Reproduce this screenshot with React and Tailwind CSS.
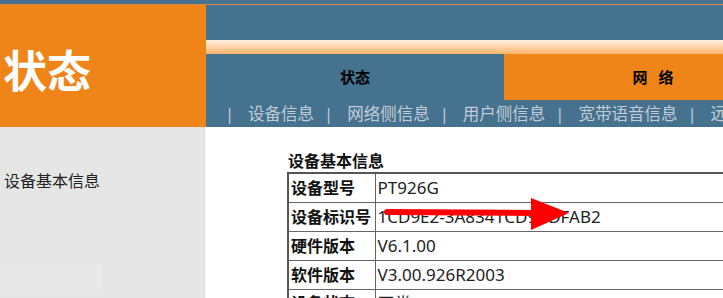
import React from "react";

const navItems = ["设备信息", "网络侧信息", "用户侧信息", "宽带语音信息", "远程管理状态"];

const rows = [
  ["设备型号", "PT926G"],
  ["设备标识号", "1CD9E2-3A8341CD9BDFAB2"],
  ["硬件版本", "V6.1.00"],
  ["软件版本", "V3.00.926R2003"],
  ["设备状态", "正常"],
];

export default function App() {
  return (
    <div
      className="w-[723px] h-[298px] overflow-hidden bg-white relative"
      style={{ fontFamily: '"Noto Sans", "Noto Sans CJK SC", sans-serif' }}
    >
      {/* top strip */}
      <div className="h-[4px] bg-[#44728f]" />
      <div className="h-[1px] bg-[#d98a3e]" />

      {/* header */}
      <div className="flex h-[122px]">
        <div className="w-[206px] shrink-0 bg-[#ef8419] flex items-center pl-[3px]">
          <span className="text-white font-bold text-[44px] leading-none mt-[10px]">状态</span>
        </div>
        <div className="flex-1 flex flex-col bg-[#44728f] min-w-0">
          <div className="h-[35px]" />
          <div className="h-[14px] bg-gradient-to-b from-[#fff1e6] via-[#ffd3a6] to-[#ffb56a]" />
          <div className="flex h-[46px]">
            <div className="w-[298px] shrink-0 flex items-center justify-center text-[15px] font-bold text-black">状态</div>
            <div className="w-[298px] shrink-0 bg-[#ef8419] flex items-center justify-center gap-[11px] text-[15px] font-bold text-black">
              <span>网</span>
              <span>络</span>
            </div>
          </div>
          <div className="flex-1 flex items-center whitespace-nowrap text-[16.5px] text-[#c3ccd6] pl-[19px] pt-[1px]">
            {navItems.map((t) => (
              <React.Fragment key={t}>
                <span>|</span>
                <span className="ml-[14px] mr-[10px]">{t}</span>
              </React.Fragment>
            ))}
          </div>
        </div>
      </div>

      {/* body */}
      <div className="flex h-[171px]">
        <div className="w-[205px] shrink-0 bg-[#e6e6e6] border-r border-[#dcdcdc] flex flex-col">
          <div className="pt-[42px] pl-[4px] text-[16px] text-[#222]">设备基本信息</div>
          <div className="mt-[70px] w-[103px] h-[28px] bg-[#e8e8e8]" />
        </div>
        <div className="flex-1 pl-[82px] pt-[24px]">
          <div className="text-[16px] font-bold text-[#111] leading-[21px] pl-[1px]">设备基本信息</div>
          <table className="border-collapse border-2 border-[#555] w-[450px]">
            <tbody>
              {rows.map(([k, v]) => (
                <tr key={k} className="h-[29px]">
                  <td className="border border-[#666] w-[87px] px-[2px] text-[16px] font-bold text-[#111] whitespace-nowrap">{k}</td>
                  <td className="border border-[#666] px-[2px] text-[17px] text-[#222] whitespace-nowrap">{v}</td>
                </tr>
              ))}
            </tbody>
          </table>
        </div>
      </div>

      {/* red arrow annotation */}
      <svg className="absolute left-[380px] top-[196px]" width="200" height="40" viewBox="0 0 200 40">
        <line x1="7" y1="16" x2="152" y2="17" stroke="#ff0000" strokeWidth="6" strokeLinecap="round" />
        <polygon points="151,2 189,17 151,34" fill="#ff0000" />
      </svg>
    </div>
  );
}
